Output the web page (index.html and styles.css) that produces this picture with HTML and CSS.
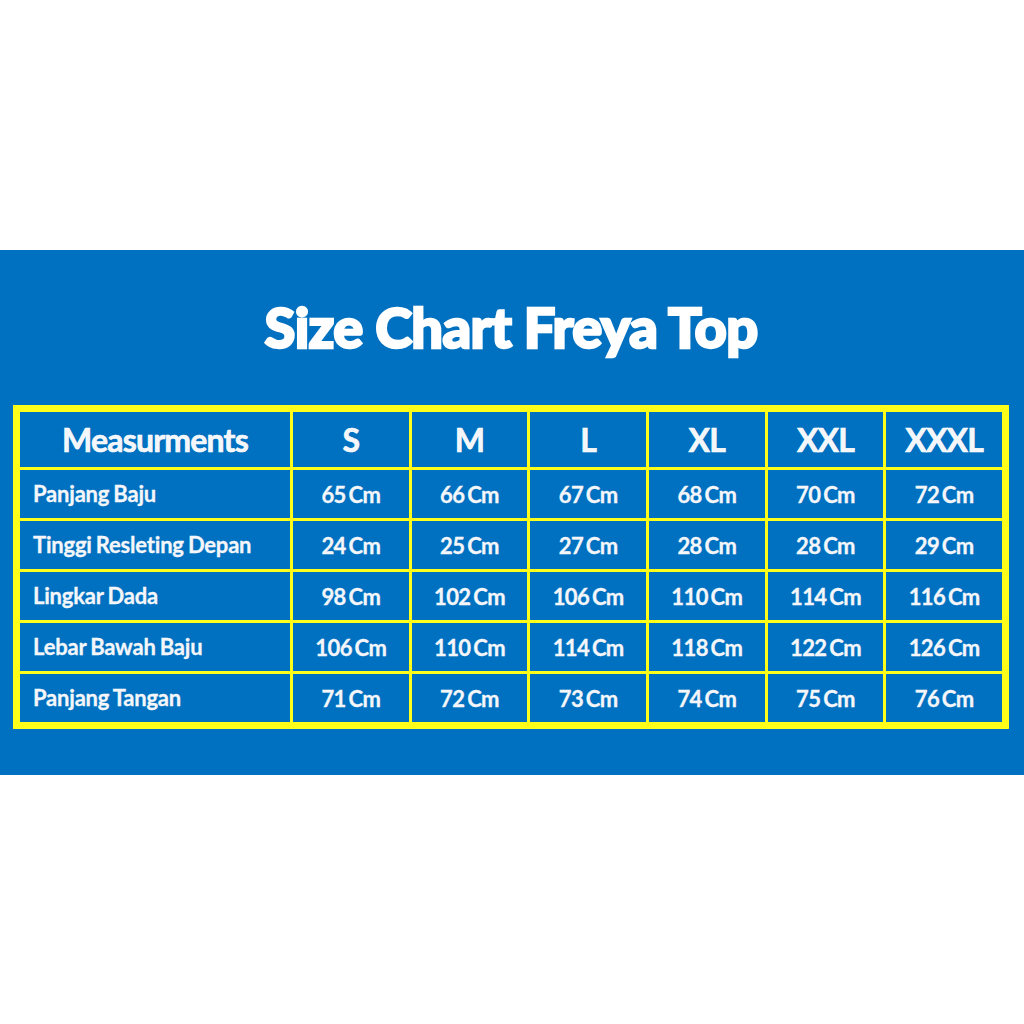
FILE: index.html
```html
<!DOCTYPE html>
<html>
<head>
<meta charset="utf-8">
<link rel="stylesheet" href="styles.css">
</head>
<body>
<section class="band">
  <h1 class="title">Size Chart Freya Top</h1>
  <div class="chart">
    <div class="hd first">Measurments</div>
    <div class="hd">S</div>
    <div class="hd">M</div>
    <div class="hd">L</div>
    <div class="hd">XL</div>
    <div class="hd">XXL</div>
    <div class="hd">XXXL</div>

    <div class="lbl">Panjang Baju</div>
    <div class="val">65 Cm</div><div class="val">66 Cm</div><div class="val">67 Cm</div><div class="val">68 Cm</div><div class="val">70 Cm</div><div class="val">72 Cm</div>

    <div class="lbl">Tinggi Resleting Depan</div>
    <div class="val">24 Cm</div><div class="val">25 Cm</div><div class="val">27 Cm</div><div class="val">28 Cm</div><div class="val">28 Cm</div><div class="val">29 Cm</div>

    <div class="lbl">Lingkar Dada</div>
    <div class="val">98 Cm</div><div class="val">102 Cm</div><div class="val">106 Cm</div><div class="val">110 Cm</div><div class="val">114 Cm</div><div class="val">116 Cm</div>

    <div class="lbl">Lebar Bawah Baju</div>
    <div class="val">106 Cm</div><div class="val">110 Cm</div><div class="val">114 Cm</div><div class="val">118 Cm</div><div class="val">122 Cm</div><div class="val">126 Cm</div>

    <div class="lbl">Panjang Tangan</div>
    <div class="val">71 Cm</div><div class="val">72 Cm</div><div class="val">73 Cm</div><div class="val">74 Cm</div><div class="val">75 Cm</div><div class="val">76 Cm</div>
  </div>
</section>
</body>
</html>
```
FILE: styles.css
```css
html, body {
  margin: 0;
  padding: 0;
  background: #ffffff;
}
body {
  padding-top: 250px;
  height: 1024px;
  box-sizing: border-box;
  font-family: Lato, "Open Sans", sans-serif;
}
.band {
  background: #0070c0;
  height: 525px;
  box-sizing: border-box;
  padding: 34px 15px 0 13px;
}
.title {
  margin: 0;
  height: 121px;
  text-align: center;
  color: #ffffff;
  font-size: 56px;
  font-weight: 900;
  letter-spacing: -0.7px;
  line-height: 86px;
  -webkit-text-stroke: 2.4px #ffffff;
}
.chart {
  display: grid;
  grid-template-columns: 270px repeat(6, 1fr);
  grid-template-rows: 55px repeat(5, 48px);
  gap: 3px;
  background: #ffff1a;
  border: 7px solid #ffff1a;
}
.chart > div {
  background: #0070c0;
  color: #f4f6fa;
  display: flex;
  align-items: center;
  font-weight: 700;
}
.hd {
  justify-content: center;
  font-weight: 800;
  font-size: 32px;
  color: #ffffff;
  letter-spacing: -0.8px;
  -webkit-text-stroke: 0.6px #ffffff;
}
.lbl {
  padding-left: 13px;
  font-size: 22px;
  letter-spacing: -0.2px;
  word-spacing: -1px;
  padding-bottom: 2px;
  -webkit-text-stroke: 0.3px #f4f6fa;
}
.val {
  justify-content: center;
  font-size: 22px;
  letter-spacing: -0.6px;
  word-spacing: -2px;
  -webkit-text-stroke: 0.3px #f4f6fa;
}
```
